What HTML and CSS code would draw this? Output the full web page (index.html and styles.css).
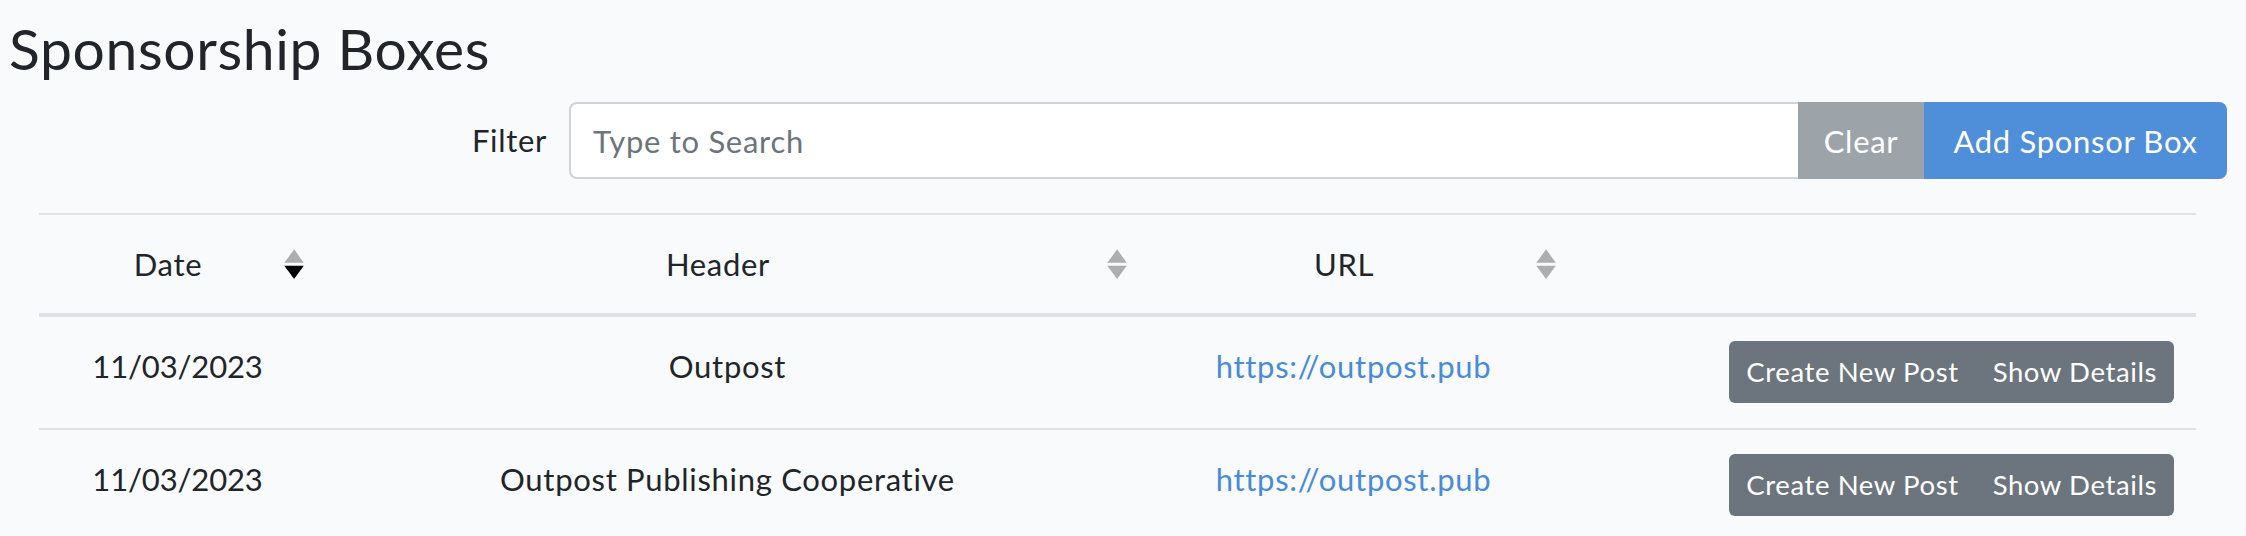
FILE: index.html
```html
<!DOCTYPE html>
<html lang="en">
<head>
<meta charset="utf-8">
<title>Sponsorship Boxes</title>
<link rel="stylesheet" href="styles.css">
</head>
<body>
<div class="page">
  <h2 class="title">Sponsorship Boxes</h2>
  <div class="filter-row">
    <label class="filter-label" for="search">Filter</label>
    <div class="input-group">
      <input id="search" class="search" type="search" placeholder="Type to Search">
      <button class="btn btn-clear" disabled>Clear</button>
      <button class="btn btn-add">Add Sponsor Box</button>
    </div>
  </div>
  <table class="boxes">
    <colgroup>
      <col class="c-date"><col class="c-header"><col class="c-url"><col class="c-actions">
    </colgroup>
    <thead>
      <tr>
        <th class="sortable">Date
          <svg class="sort" viewBox="0 0 101 101" preserveAspectRatio="none"><path class="up" d="M51 1l25 23 24 22H1l25-22z"/><path class="down active" d="M51 101l25-23 24-22H1l25 22z"/></svg>
        </th>
        <th class="sortable">Header
          <svg class="sort" viewBox="0 0 101 101" preserveAspectRatio="none"><path class="up" d="M51 1l25 23 24 22H1l25-22z"/><path class="down" d="M51 101l25-23 24-22H1l25 22z"/></svg>
        </th>
        <th class="sortable">URL
          <svg class="sort" viewBox="0 0 101 101" preserveAspectRatio="none"><path class="up" d="M51 1l25 23 24 22H1l25-22z"/><path class="down" d="M51 101l25-23 24-22H1l25 22z"/></svg>
        </th>
        <th></th>
      </tr>
    </thead>
    <tbody>
      <tr>
        <td class="date">11/03/2023</td>
        <td>Outpost</td>
        <td><a href="#" class="link">https://outpost.pub</a></td>
        <td class="actions"><div class="btn-group"><button class="btn-sm">Create New Post</button><button class="btn-sm">Show Details</button></div></td>
      </tr>
      <tr>
        <td class="date">11/03/2023</td>
        <td>Outpost Publishing Cooperative</td>
        <td><a href="#" class="link">https://outpost.pub</a></td>
        <td class="actions"><div class="btn-group"><button class="btn-sm">Create New Post</button><button class="btn-sm">Show Details</button></div></td>
      </tr>
    </tbody>
  </table>
</div>
</body>
</html>
```

FILE: styles.css
```css
* { box-sizing: border-box; }

html, body {
  margin: 0;
  padding: 0;
  background: #f8fafc;
}

body {
  color: #212529;
  font-family: "Lato", "Noto Sans", sans-serif;
  font-size: 31px;
  letter-spacing: 0.7px;
  line-height: 1.6;
  overflow: hidden;
}

.page {
  width: 2246px;
}

.title {
  margin: 14px 0 20px 9px;
  font-size: 57px;
  letter-spacing: 0.65px;
  font-weight: 400;
  line-height: 1.2;
}

.filter-row {
  display: flex;
  align-items: center;
  margin-right: 19px;
}

.filter-label {
  width: 547px;
  flex: none;
  text-align: right;
  margin-right: 22px;
}

.input-group {
  flex: 1;
  display: flex;
  height: 77px;
}

.search {
  flex: 1;
  min-width: 0;
  height: 100%;
  border: 2px solid #ced4da;
  border-right: none;
  border-radius: 8px 0 0 8px;
  background: #fff;
  padding: 0 22px;
  font-family: inherit;
  font-size: 31px;
  letter-spacing: 0.7px;
  color: #495057;
  outline: none;
}

.search::placeholder { color: #6c757d; }

.btn {
  border: none;
  height: 100%;
  padding: 0;
  font-family: inherit;
  font-size: 31px;
  letter-spacing: 0.7px;
  color: #fff;
}

.btn-clear {
  width: 126px;
  background: #9da4a9;
}

.btn-add {
  width: 303px;
  background: #4f8ed8;
  border-radius: 0 8px 8px 0;
}

.boxes {
  margin: 34px 0 0 39px;
  width: 2157px;
  border-collapse: collapse;
  table-layout: fixed;
}

.c-date { width: 277px; }
.c-header { width: 823px; }
.c-url { width: 429px; }
.c-actions { width: 628px; }

th {
  position: relative;
  font-weight: 400;
  text-align: center;
  padding: 24px 43px 24px 24px;
  line-height: 50px;
  border-top: 2px solid #dee2e6;
  border-bottom: 4px solid #dee2e6;
}

.sort {
  position: absolute;
  right: 12px;
  top: 50%;
  width: 20px;
  height: 30px;
  margin-top: -15px;
}

.sort path { fill: #000; opacity: 0.3; }
.sort path.active { opacity: 1; }

td {
  text-align: center;
  vertical-align: top;
  padding: 25px 24px;
  line-height: 48px;
  border-top: 2px solid #dee2e6;
}

td.date {
  letter-spacing: -0.15px;
}

td.actions {
  text-align: right;
  padding-right: 22px;
  padding-top: 24px;
}

.link {
  color: #4a8bd6;
  text-decoration: none;
}

.btn-group {
  display: inline-flex;
  border-radius: 6px;
  overflow: hidden;
  vertical-align: top;
}

.btn-sm {
  border: none;
  background: #6c757d;
  color: #fff;
  font-family: inherit;
  font-size: 27.5px;
  letter-spacing: 0.6px;
  line-height: 40px;
  padding: 11px 17px;
}
```
